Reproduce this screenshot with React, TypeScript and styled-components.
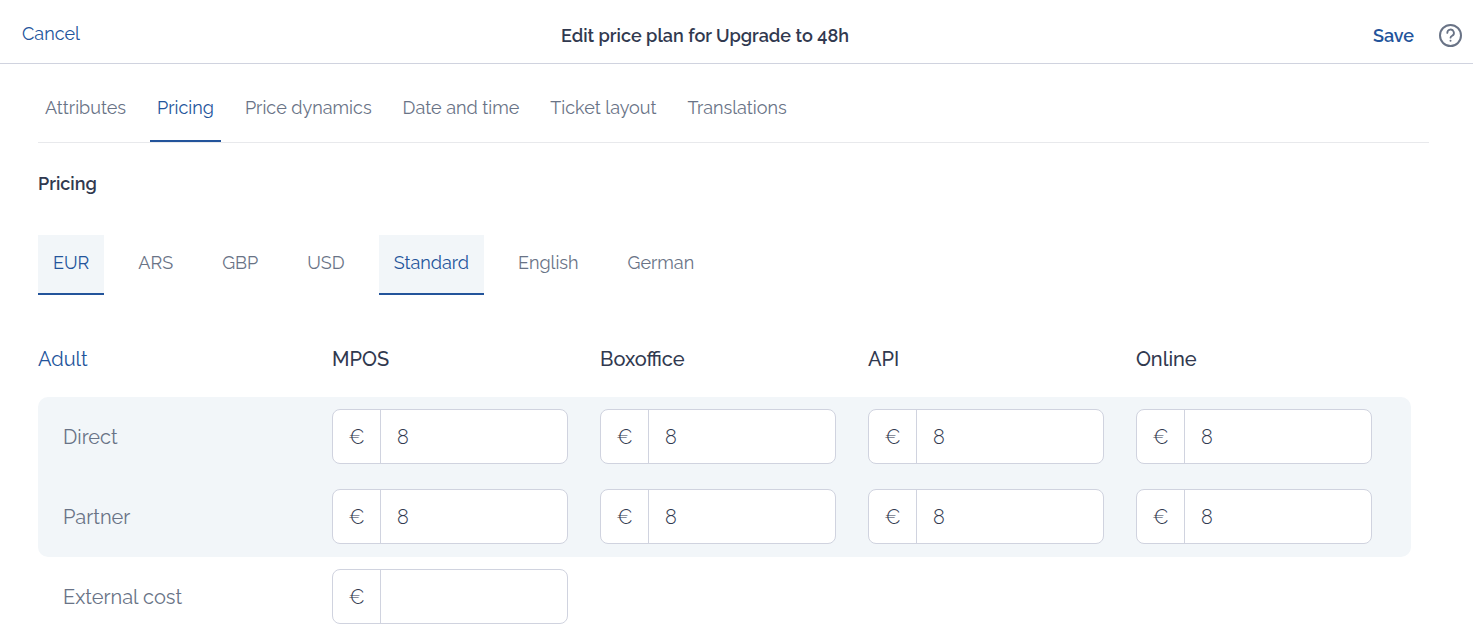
import React from "react";
import styled, { createGlobalStyle } from "styled-components";

const color = {
  text: "#31394f",
  muted: "#697386",
  accent: "#23549b",
  panel: "#f2f6f9",
  line: "#d0d3df",
  hairline: "#e8e9ec",
};

const GlobalStyle = createGlobalStyle`
  *, *::before, *::after { box-sizing: border-box; }
  body {
    margin: 0;
    background: #fff;
    color: ${color.text};
    font-family: Raleway, Lato, sans-serif;
    font-size: 18px;
    line-height: 24px;
  }
  button, input { font: inherit; color: inherit; }
`;

const Header = styled.header`
  display: grid;
  grid-template-columns: 57px 1fr 131px;
  align-items: center;
  padding: 22px 11px 13px 22px;
  border-bottom: 1px solid ${color.line};
`;

const TextButton = styled.button<{ $strong?: boolean }>`
  align-self: start;
  padding: 0;
  border: 0;
  background: none;
  color: ${color.accent};
  font-weight: ${(p) => (p.$strong ? 600 : 400)};
  text-align: left;
  cursor: pointer;
`;

const Title = styled.h1`
  margin: 0;
  font-size: 18px;
  font-weight: 600;
  text-align: center;
`;

const Actions = styled.div`
  display: flex;
  align-items: center;
  justify-content: flex-end;
  gap: 24px;

  ${TextButton} { align-self: center; }
`;

const HelpButton = styled.button`
  display: flex;
  padding: 2px 0;
  border: 0;
  background: none;
  color: ${color.muted};
  cursor: pointer;
`;

const Main = styled.main`
  padding: 0 44px 0 38px;
`;

const Tabs = styled.nav`
  display: flex;
  gap: 17px;
  border-bottom: 1px solid ${color.hairline};
`;

const Tab = styled.a<{ $active?: boolean }>`
  padding: 32px 7px 20px;
  border-bottom: 2px solid ${(p) => (p.$active ? color.accent : "transparent")};
  color: ${(p) => (p.$active ? color.accent : color.muted)};
  text-decoration: none;
`;

const SectionTitle = styled.h2`
  margin: 29px 0 39px;
  font-size: 18px;
  font-weight: 600;
`;

const Switches = styled.div`
  display: flex;
  gap: 19px;
`;

const Switch = styled.button<{ $active?: boolean }>`
  height: 60px;
  padding: 0 15px 2px;
  border: 0;
  border-bottom: 2px solid ${(p) => (p.$active ? color.accent : "transparent")};
  background: ${(p) => (p.$active ? color.panel : "transparent")};
  color: ${(p) => (p.$active ? color.accent : color.muted)};
  cursor: pointer;
`;

const PriceTable = styled.table`
  display: block;
  margin: 26px 18px 0 0;
  font-size: 20px;
`;

const HeadGroup = styled.thead`
  display: block;
`;

const RowGroup = styled.tbody<{ $shaded?: boolean }>`
  display: block;
  border-radius: 10px;
  background: ${(p) => (p.$shaded ? color.panel : "transparent")};
`;

const Row = styled.tr`
  display: grid;
  grid-template-columns: 262px repeat(4, minmax(0, 1fr));
  gap: 32px;
  align-items: center;
  height: 80px;
  padding-right: 39px;

  ${HeadGroup} & { height: 76px; }
`;

const ColumnHead = styled.th<{ $category?: boolean }>`
  padding: 0;
  color: ${(p) => (p.$category ? color.accent : color.text)};
  font-weight: ${(p) => (p.$category ? 400 : 500)};
  text-align: left;
`;

const RowHead = styled.th`
  padding: 0 0 0 25px;
  color: ${color.muted};
  font-weight: 400;
  text-align: left;
`;

const Cell = styled.td`
  padding: 0 0 1px;
`;

const PriceField = styled.label`
  display: flex;
  height: 55px;
  overflow: hidden;
  border: 1px solid ${color.line};
  border-radius: 8px;
  background: #fff;
  font-weight: 300;
`;

const Currency = styled.span`
  display: flex;
  flex: 0 0 48px;
  align-items: center;
  justify-content: center;
  border-right: 1px solid ${color.line};
`;

const PriceInput = styled.input`
  flex: 1;
  min-width: 0;
  padding: 0 16px;
  border: 0;
  outline: none;
  background: transparent;
`;

const tabs = ["Attributes", "Pricing", "Price dynamics", "Date and time", "Ticket layout", "Translations"];
const switches = ["EUR", "ARS", "GBP", "USD", "Standard", "English", "German"];
const activeSwitches = ["EUR", "Standard"];
const channels = ["MPOS", "Boxoffice", "API", "Online"];

function HelpIcon() {
  return (
    <svg width="24" height="24" viewBox="0 0 24 24" fill="none" stroke="currentColor" strokeLinecap="round" aria-hidden="true">
      <circle cx="12.5" cy="11.5" r="10.5" strokeWidth="2" />
      <path d="M9.3 8.9a3.3 3.3 0 1 1 4.9 2.8c-1.1.6-1.7 1-1.7 2" strokeWidth="1.8" />
      <circle cx="12.5" cy="16.8" r="1" fill="currentColor" stroke="none" />
    </svg>
  );
}

function PriceRow({ label, prices }: { label: string; prices: string[] }) {
  return (
    <Row>
      <RowHead scope="row">{label}</RowHead>
      {prices.map((price, i) => (
        <Cell key={channels[i]}>
          <PriceField>
            <Currency>€</Currency>
            <PriceInput type="text" inputMode="decimal" defaultValue={price} aria-label={`${label} ${channels[i]}`} />
          </PriceField>
        </Cell>
      ))}
    </Row>
  );
}

export default function App() {
  return (
    <>
      <GlobalStyle />
      <Header>
        <TextButton type="button">Cancel</TextButton>
        <Title>Edit price plan for Upgrade to 48h</Title>
        <Actions>
          <TextButton type="button" $strong>Save</TextButton>
          <HelpButton type="button" aria-label="Help">
            <HelpIcon />
          </HelpButton>
        </Actions>
      </Header>
      <Main>
        <Tabs>
          {tabs.map((tab) => (
            <Tab key={tab} href="#" $active={tab === "Pricing"}>{tab}</Tab>
          ))}
        </Tabs>
        <SectionTitle>Pricing</SectionTitle>
        <Switches>
          {switches.map((name) => (
            <Switch key={name} type="button" $active={activeSwitches.includes(name)}>{name}</Switch>
          ))}
        </Switches>
        <PriceTable>
          <HeadGroup>
            <Row>
              <ColumnHead scope="col" $category>Adult</ColumnHead>
              {channels.map((channel) => (
                <ColumnHead key={channel} scope="col">{channel}</ColumnHead>
              ))}
            </Row>
          </HeadGroup>
          <RowGroup $shaded>
            <PriceRow label="Direct" prices={["8", "8", "8", "8"]} />
            <PriceRow label="Partner" prices={["8", "8", "8", "8"]} />
          </RowGroup>
          <RowGroup>
            <PriceRow label="External cost" prices={[""]} />
          </RowGroup>
        </PriceTable>
      </Main>
    </>
  );
}
